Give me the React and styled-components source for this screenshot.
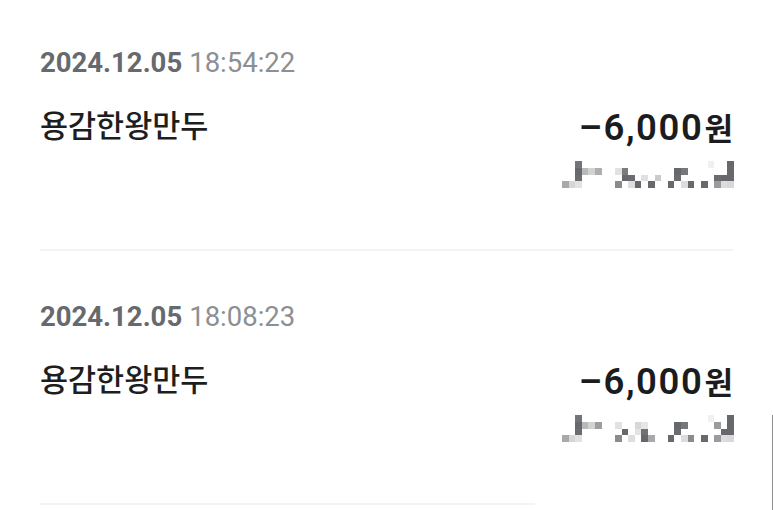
import React from "react";
import styled, { createGlobalStyle } from "styled-components";

const Global = createGlobalStyle`
  html, body { margin: 0; padding: 0; background: #ffffff; }
  body { font-family: Roboto, "Noto Sans CJK KR", sans-serif; }
  * { box-sizing: border-box; }
`;

const Page = styled.main`
  position: relative;
  width: 773px;
  height: 510px;
  overflow: hidden;
  padding: 0 40px;
  background: #ffffff;
`;

const Item = styled.section`
  padding-top: 50px;
  &:first-child { padding-top: 47px; }
`;

const DateLine = styled.div`
  font-family: Roboto, "Noto Sans CJK KR", sans-serif;
  font-size: 27.5px;
  line-height: 31px;
  color: #8c8f93;
  white-space: nowrap;
`;

const Day = styled.span`
  font-weight: 700;
  color: #66696d;
  margin-right: 7px;
`;

const Row = styled.div`
  display: flex;
  justify-content: space-between;
  align-items: flex-start;
  margin-top: 27px;
`;

const Name = styled.div`
  font-family: "Noto Sans CJK KR", sans-serif;
  font-size: 30.5px;
  line-height: 38px;
  font-weight: 500;
  color: #1e1e1e;
`;

const Right = styled.div`
  display: flex;
  flex-direction: column;
  align-items: flex-end;
`;

const Amount = styled.div`
  display: flex;
  align-items: baseline;
  height: 42px;
  font-family: Roboto, sans-serif;
  font-size: 36.5px;
  line-height: 42px;
  font-weight: 600;
  color: #1b1c1e;
  margin-top: 1px;
`;

const Digits = styled.span`
  letter-spacing: 1.6px;
`;

const Won = styled.span`
  font-family: "Noto Sans CJK KR", sans-serif;
  font-size: 31px;
  font-weight: 700;
  line-height: 42px;
  margin-left: 1px;
`;

const Mosaic = styled.svg`
  display: block;
  width: 172px;
  height: 27px;
  margin-top: 13px;
  margin-right: -1px;
  filter: blur(0.35px);
`;

const Divider = styled.hr`
  margin: 61px 0 0;
  border: 0;
  height: 2px;
  background: #f3f3f3;
  width: ${(p) => p.$width || "100%"};
`;

const EdgeLine = styled.div`
  position: absolute;
  right: 0;
  top: 415px;
  bottom: 0;
  width: 1px;
  background: #8f8f8f;
`;

const pattern1 = [
  [0, 3, "#a9a9ab"], [1, 3, "#d6d6d8"], [2, 3, "#e2e2e2"],
  [2, 0, "#727478"], [2, 1, "#66686c"], [2, 2, "#6a6c70"],
  [3, 1, "#b8b9bb"], [4, 1, "#d2d2d4"], [5, 1, "#adaeb0"],
  [8, 1, "#e2e2e4"], [8, 3, "#8a8b8e"],
  [9, 1, "#7a7c80"], [9, 2, "#66686c"],
  [10, 2, "#6a6c70"], [10, 3, "#dededf"],
  [11, 3, "#68696d"], [12, 2, "#e0e0e2"], [13, 3, "#68696d"], [14, 2, "#cbcbcd"],
  [16, 3, "#68696d"], [17, 1, "#66686c"], [17, 2, "#6a6c70"],
  [18, 1, "#75777b"], [18, 3, "#dcdcde"], [19, 3, "#68696d"],
  [21, 3, "#68696d"], [22, 0, "#f0f0f0"],
  [23, 2, "#6a6c70"], [23, 3, "#9a9b9e"], [24, 2, "#66686c"], [24, 3, "#dcdcde"],
  [25, 0, "#66686c"], [25, 1, "#66686c"], [25, 2, "#66686c"], [25, 3, "#d8d8da"],
];

const pattern2 = [
  [0, 3, "#a9a9ab"], [1, 3, "#d6d6d8"], [2, 3, "#e2e2e2"],
  [2, 0, "#727478"], [2, 1, "#66686c"], [2, 2, "#6a6c70"],
  [3, 1, "#b8b9bb"], [4, 1, "#d2d2d4"], [5, 1, "#9d9ea0"],
  [8, 1, "#e2e2e4"], [8, 3, "#8a8b8e"],
  [9, 2, "#66686c"], [10, 3, "#dededf"],
  [11, 1, "#d8d8da"], [11, 2, "#e4e4e6"], [12, 1, "#e6e6e8"],
  [12, 2, "#707276"], [12, 3, "#66686c"], [13, 3, "#a8a9ab"],
  [16, 3, "#68696d"], [17, 1, "#66686c"], [17, 2, "#6a6c70"],
  [18, 1, "#75777b"], [18, 3, "#dcdcde"], [19, 3, "#8a8b8e"],
  [21, 3, "#68696d"], [22, 0, "#f0f0f0"],
  [23, 1, "#9a9b9e"], [23, 3, "#9a9b9e"], [24, 2, "#66686c"], [24, 3, "#dcdcde"],
  [25, 0, "#66686c"], [25, 1, "#66686c"], [25, 2, "#66686c"], [25, 3, "#d8d8da"],
];

function MosaicText({ cells }) {
  return (
    <Mosaic viewBox="0 0 26 4" preserveAspectRatio="none" shapeRendering="crispEdges" aria-hidden="true">
      {cells.map(([x, y, c], i) => (
        <rect key={i} x={x} y={y} width="1" height="1" fill={c} />
      ))}
    </Mosaic>
  );
}

const entries = [
  { day: "2024.12.05", time: "18:54:22", name: "용감한왕만두", amount: "–6,000", cells: pattern1, divider: "100%" },
  { day: "2024.12.05", time: "18:08:23", name: "용감한왕만두", amount: "–6,000", cells: pattern2, divider: "495px" },
];

export default function App() {
  return (
    <>
      <Global />
      <Page>
        {entries.map((e, i) => (
          <Item key={i}>
            <DateLine>
              <Day>{e.day}</Day>
              {e.time}
            </DateLine>
            <Row>
              <Name>{e.name}</Name>
              <Right>
                <Amount>
                  <Digits>{e.amount}</Digits>
                  <Won>원</Won>
                </Amount>
                <MosaicText cells={e.cells} />
              </Right>
            </Row>
            <Divider $width={e.divider} />
          </Item>
        ))}
        <EdgeLine />
      </Page>
    </>
  );
}
